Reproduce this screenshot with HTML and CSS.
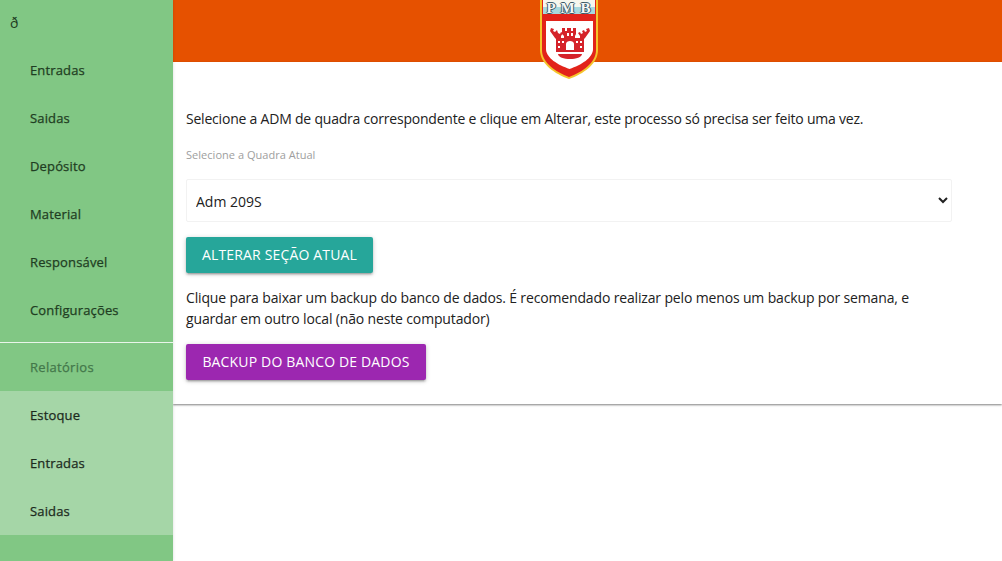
FILE: index.html
```html
<!DOCTYPE html>
<html lang="pt">
<head>
<meta charset="utf-8">
<title>Configurações</title>
<link rel="stylesheet" href="styles.css">
</head>
<body>
<div class="app">
  <nav class="sidebar">
    <div class="toggle">ð</div>
    <a class="item">Entradas</a>
    <a class="item">Saidas</a>
    <a class="item">Depósito</a>
    <a class="item">Material</a>
    <a class="item">Responsável</a>
    <a class="item">Configurações</a>
    <div class="divider"></div>
    <div class="item heading">Relatórios</div>
    <div class="submenu">
      <a class="item">Estoque</a>
      <a class="item">Entradas</a>
      <a class="item">Saidas</a>
    </div>
  </nav>
  <div class="main">
    <header class="topbar">
      <svg class="crest" viewBox="0 0 60 80" width="60" height="80" aria-hidden="true">
        <path d="M1 -2H59V50C59 64 44 74 30 79C16 74 1 64 1 50Z" fill="#f4c52c"/>
        <path d="M3 -2H57V50C57 63 43 72 30 77C17 72 3 63 3 50Z" fill="#e2231a"/>
        <rect x="4" y="-2" width="52" height="9" fill="#f6f6ee"/>
        <rect x="4" y="7" width="52" height="7" fill="#a8d8de"/>
        <path d="M7 21H54V49C54 58 42 65 30.500 69C19 65 7 58 7 49Z" fill="#fff"/>
        <path fill="#d5232a" d="M23 34V28H26V31H28V28H32V31H34V28H37V34L36 36V38H41L41 36L39 33L41 32L42 34L44 33L43 31L45 30L46 32L48 31L47 29L50 28L51 31L46 38L45 39V52H17V39L16 38L11 31L12 28L15 29L14 31L16 32L18 30L19 33L21 34L22 32L24 33L22 36L22 38H25V36Z"/>
        <g fill="#fff">
          <rect x="28" y="33" width="2" height="3"/>
          <rect x="32" y="33" width="2" height="3"/>
          <rect x="19" y="41" width="2" height="2"/>
          <rect x="23" y="41" width="2" height="2"/>
          <rect x="37" y="41" width="2" height="2"/>
          <rect x="41" y="41" width="2" height="2"/>
          <rect x="19" y="46" width="2" height="2"/>
          <rect x="41" y="46" width="2" height="2"/>
          <path d="M27 50V44C27 40 35 40 35 44V50Z"/>
        </g>
        <path d="M19 54H43C43 57 37 59 31 59C25 59 19 57 19 54Z" fill="#d5232a"/>
      </svg>
      <span class="crest-text">P M B</span>
    </header>
    <section class="card">
      <p class="intro">Selecione a ADM de quadra correspondente e clique em Alterar, este processo só precisa ser feito uma vez.</p>
      <label class="field-label" for="quadra">Selecione a Quadra Atual</label>
      <select class="select" id="quadra">
        <option>Adm 209S</option>
      </select>
      <button class="btn btn-teal" type="button">Alterar Seção Atual</button>
      <p class="note">Clique para baixar um backup do banco de dados. É recomendado realizar pelo menos um backup por semana, e guardar em outro local (não neste computador)</p>
      <button class="btn btn-purple" type="button">Backup do Banco de Dados</button>
    </section>
  </div>
</div>
</body>
</html>
```

FILE: styles.css
```css
* { box-sizing: border-box; }

html, body {
  margin: 0;
  height: 100%;
  overflow: hidden;
  background: #fff;
  font-family: "Open Sans", "Noto Sans", sans-serif;
  font-size: 14px;
  color: #212121;
}

.app {
  display: flex;
  height: 561px;
}

.sidebar {
  flex: 0 0 173px;
  background: #81c784;
  box-shadow: 0 0 3px rgba(0, 0, 0, 0.15);
  z-index: 2;
}

.toggle {
  height: 46px;
  padding-left: 10px;
  line-height: 46px;
  font-size: 14px;
  color: #1d3a20;
}

.item {
  display: block;
  height: 48px;
  padding-left: 30px;
  line-height: 48px;
  font-size: 13px;
  font-weight: 500;
  letter-spacing: 0.15px;
  -webkit-text-stroke: 0.25px currentColor;
  color: #1f3d22;
}

.divider {
  height: 1px;
  margin-top: 8px;
  background: #e9f5ea;
}

.heading {
  margin-top: -0.5px;
  font-weight: 400;
  letter-spacing: 0.3px;
  color: #43774a;
}

.submenu {
  background: #a5d6a7;
}

.submenu .item {
  color: #1c2a1d;
}

.main {
  flex: 1;
  min-width: 0;
  position: relative;
}

.topbar {
  height: 62px;
  background: #e65100;
  box-shadow: 0 1px 4px rgba(0, 0, 0, 0.3);
}

.crest {
  position: absolute;
  top: 0;
  left: 366px;
  z-index: 3;
}

.crest-text {
  position: absolute;
  top: 1px;
  left: 368px;
  width: 56px;
  z-index: 4;
  text-align: center;
  font-family: "Liberation Serif", serif;
  font-size: 15px;
  font-weight: 700;
  line-height: 15px;
  letter-spacing: 1px;
  white-space: nowrap;
  color: #f4f7f5;
  text-shadow: 1px 0 0 #3c5a66, -1px 0 0 #3c5a66, 0 1px 0 #3c5a66, 0 -1px 0 #3c5a66;
}

.card {
  height: 342px;
  padding: 1px 13px 0;
  background: #fff;
  box-shadow: 0 1px 2px rgba(0, 0, 0, 0.5);
}

.intro {
  margin: 45px 0 0;
  font-size: 14px;
  line-height: 21px;
  letter-spacing: -0.21px;
  white-space: nowrap;
}

.field-label {
  display: block;
  margin-top: 18px;
  font-size: 11px;
  line-height: 15px;
  letter-spacing: 0.03px;
  color: #9e9e9e;
}

.select {
  display: block;
  width: 766px;
  height: 43px;
  margin-top: 17px;
  padding: 2px 5px 0;
  background: #fff;
  border: 1px solid #f2f2f2;
  border-radius: 2px;
  font-family: inherit;
  font-size: 14px;
  color: #212121;
}

.btn {
  display: block;
  height: 36px;
  padding: 0 16px 1px;
  border: 0;
  border-radius: 2px;
  font-family: inherit;
  font-size: 14px;
  letter-spacing: 0.16px;
  text-transform: uppercase;
  white-space: nowrap;
  color: #fff;
  box-shadow: 0 2px 2px rgba(0, 0, 0, 0.14), 0 3px 1px -2px rgba(0, 0, 0, 0.12), 0 1px 5px rgba(0, 0, 0, 0.2);
}

.btn-teal {
  width: 187px;
  margin-top: 15px;
  background: #26a69a;
}

.btn-purple {
  width: 240px;
  margin-top: 15px;
  background: #9c27b0;
}

.note {
  margin: 14px 0 0;
  width: 770px;
  font-size: 14px;
  line-height: 21px;
  letter-spacing: -0.15px;
}
```
